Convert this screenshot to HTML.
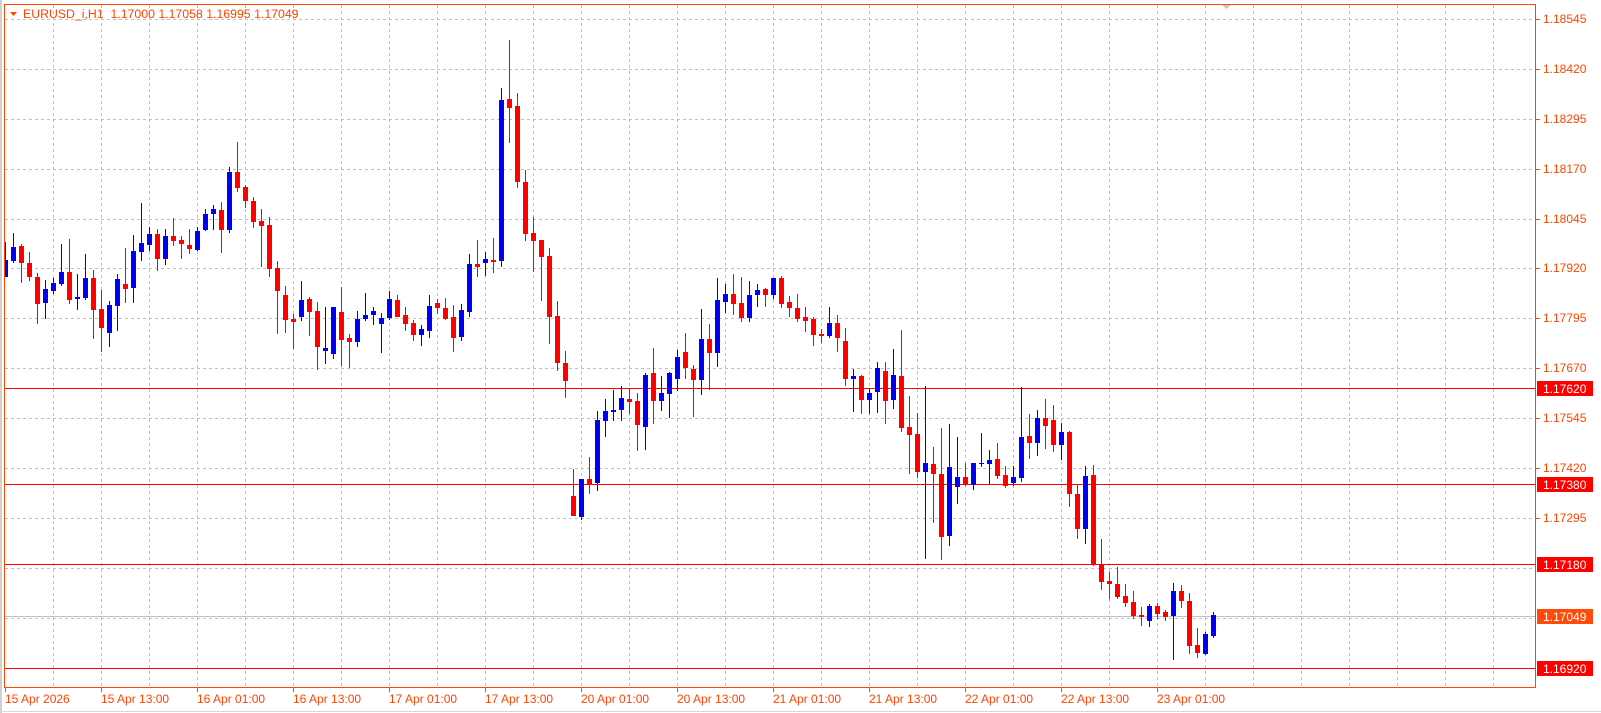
<!DOCTYPE html>
<html><head><meta charset="utf-8">
<style>
html,body{margin:0;padding:0;background:#fff;width:1601px;height:713px;overflow:hidden}
svg{display:block}
text{font-family:"Liberation Sans",sans-serif;font-size:12px}
</style></head><body>
<svg width="1601" height="713" viewBox="0 0 1601 713" xmlns="http://www.w3.org/2000/svg">
<rect x="0" y="0" width="1601" height="713" fill="#fff"/>
<line x1="1" y1="0" x2="1" y2="713" stroke="#a0a0a0"/>
<line x1="0" y1="711.5" x2="1601" y2="711.5" stroke="#d8d8d8"/>
<g stroke="#c0c0c0" stroke-width="1" stroke-dasharray="3,3" fill="none">
<path d="M53.5 5V686M101.5 5V686M149.5 5V686M197.5 5V686M245.5 5V686M293.5 5V686M341.5 5V686M389.5 5V686M437.5 5V686M485.5 5V686M533.5 5V686M581.5 5V686M629.5 5V686M677.5 5V686M725.5 5V686M773.5 5V686M821.5 5V686M869.5 5V686M917.5 5V686M965.5 5V686M1013.5 5V686M1061.5 5V686M1109.5 5V686M1157.5 5V686M1205.5 5V686M1253.5 5V686M1301.5 5V686M1349.5 5V686M1397.5 5V686M1445.5 5V686M1493.5 5V686"/>
<path d="M5 19.5H1534M5 69.5H1534M5 119.5H1534M5 169.5H1534M5 219.5H1534M5 268.5H1534M5 318.5H1534M5 368.5H1534M5 418.5H1534M5 468.5H1534M5 518.5H1534M5 568.5H1534M5 618.5H1534M5 668.5H1534"/>
</g>
<line x1="5" y1="616.5" x2="1535" y2="616.5" stroke="#c0c0c0"/>
<g stroke="#ff0000" stroke-width="1">
<line x1="5" y1="388.5" x2="1535" y2="388.5"/>
<line x1="5" y1="484.5" x2="1535" y2="484.5"/>
<line x1="5" y1="564.5" x2="1535" y2="564.5"/>
<line x1="5" y1="668.5" x2="1535" y2="668.5"/>
</g>
<path stroke="#0000f0" stroke-width="1" fill="none" d="M5.5 242V277M13.5 233V263M45.5 280V319M53.5 278V294M61.5 244V286M77.5 274V310M85.5 254V300M109.5 301V347M117.5 274V331M133.5 235V303M141.5 203V261M149.5 227V251M165.5 229V265M197.5 227V251M205.5 209V231M213.5 205V230M229.5 167V233M301.5 281V321M325.5 307V364M333.5 307V359M357.5 311V347M365.5 293V321M373.5 307V325M381.5 313V353M389.5 291V320M421.5 325V346M429.5 295V338M461.5 304V341M469.5 254V317M485.5 252V276M501.5 88V267M581.5 479V520M597.5 411V491M605.5 399V437M613.5 390V421M621.5 386V421M645.5 373V450M661.5 376V411M669.5 372V418M677.5 350V391M701.5 309V395M717.5 278V367M725.5 284V313M749.5 281V322M757.5 284V307M773.5 278V299M829.5 307V338M853.5 369V412M869.5 389V414M877.5 362V413M893.5 349V409M925.5 386V559M949.5 424V546M957.5 437V504M973.5 463V490M981.5 433V467M989.5 450V484M1013.5 466V486M1021.5 387V482M1037.5 410V456M1061.5 423V460M1085.5 466V544M1149.5 604V627M1173.5 583V660M1205.5 632V655M1213.5 612V638"/>
<path fill="#0000f0" d="M4 260h4v17h-4zM11 247h5v14h-5zM43 289h5v14h-5zM51 283h5v8h-5zM59 272h5v12h-5zM75 297h5v2h-5zM83 278h5v20h-5zM107 305h5v28h-5zM115 279h5v27h-5zM131 251h5v37h-5zM139 243h5v9h-5zM147 234h5v11h-5zM163 236h5v23h-5zM195 231h5v19h-5zM203 214h5v16h-5zM211 209h5v5h-5zM227 172h5v58h-5zM299 300h5v17h-5zM323 348h5v3h-5zM331 307h5v47h-5zM355 319h5v23h-5zM363 315h5v4h-5zM371 311h5v4h-5zM379 318h5v6h-5zM387 299h5v19h-5zM419 329h5v6h-5zM427 306h5v25h-5zM459 310h5v27h-5zM467 264h5v48h-5zM483 259h5v4h-5zM499 100h5v161h-5zM579 479h5v38h-5zM595 420h5v63h-5zM603 411h5v10h-5zM611 410h5v2h-5zM619 398h5v12h-5zM643 375h5v52h-5zM659 393h5v8h-5zM667 373h5v21h-5zM675 357h5v22h-5zM699 339h5v41h-5zM715 300h5v53h-5zM723 294h5v8h-5zM747 295h5v23h-5zM755 290h5v5h-5zM771 278h5v17h-5zM827 323h5v13h-5zM851 376h5v3h-5zM867 393h5v7h-5zM875 368h5v24h-5zM891 375h5v25h-5zM923 463h5v9h-5zM947 467h5v69h-5zM955 477h5v10h-5zM971 463h5v22h-5zM979 463h5v1h-5zM987 460h5v4h-5zM1011 477h5v6h-5zM1019 437h5v41h-5zM1035 418h5v25h-5zM1059 432h5v13h-5zM1083 476h5v53h-5zM1147 606h5v15h-5zM1171 591h5v25h-5zM1203 634h5v20h-5zM1211 615h5v21h-5z"/>
<path stroke="#ff0000" stroke-width="1" fill="none" d="M21.5 244V283M29.5 252V281M37.5 273V324M69.5 239V304M93.5 270V339M101.5 290V352M125.5 248V303M157.5 229V271M173.5 218V246M181.5 236V259M189.5 229V254M221.5 202V253M237.5 142V192M245.5 185V208M253.5 197V228M261.5 209V267M269.5 217V277M277.5 261V334M285.5 286V333M293.5 314V349M309.5 297V336M317.5 302V370M341.5 287V366M349.5 334V368M397.5 295V317M405.5 307V331M413.5 320V341M437.5 299V314M445.5 298V320M453.5 305V352M477.5 240V277M493.5 238V273M509.5 40V143M517.5 93V188M525.5 170V241M533.5 217V272M541.5 240V301M549.5 248V344M557.5 301V371M565.5 351V398M573.5 469V516M589.5 457V494M629.5 389V414M637.5 393V451M653.5 348V424M685.5 333V379M693.5 365V417M709.5 324V390M733.5 274V315M741.5 277V322M765.5 288V307M781.5 276V308M789.5 296V317M797.5 294V322M805.5 307V332M813.5 317V346M821.5 329V343M837.5 315V352M845.5 328V386M861.5 375V414M885.5 362V424M901.5 330V432M909.5 396V474M917.5 413V478M933.5 447V523M941.5 428V560M965.5 463V486M997.5 443V479M1005.5 466V488M1029.5 414V459M1045.5 399V449M1053.5 405V452M1069.5 431V507M1077.5 484V539M1093.5 465V566M1101.5 539V590M1109.5 572V599M1117.5 567V599M1125.5 584V607M1133.5 591V619M1141.5 607V626M1157.5 603V619M1165.5 610V621M1181.5 585V608M1189.5 593V654M1197.5 628V658"/>
<path fill="#ff0000" d="M19 246h5v17h-5zM27 263h5v14h-5zM35 277h5v27h-5zM67 272h5v28h-5zM91 278h5v32h-5zM99 309h5v19h-5zM123 284h5v5h-5zM155 234h5v25h-5zM171 236h5v5h-5zM179 240h5v4h-5zM187 245h5v4h-5zM219 210h5v20h-5zM235 172h5v16h-5zM243 187h5v14h-5zM251 201h5v21h-5zM259 221h5v5h-5zM267 225h5v44h-5zM275 268h5v23h-5zM283 295h5v25h-5zM291 319h5v3h-5zM307 299h5v13h-5zM315 311h5v36h-5zM339 312h5v28h-5zM347 338h5v4h-5zM395 300h5v17h-5zM403 315h5v9h-5zM411 323h5v12h-5zM435 303h5v5h-5zM443 308h5v11h-5zM451 317h5v21h-5zM475 264h5v3h-5zM491 260h5v2h-5zM507 99h5v9h-5zM515 106h5v76h-5zM523 182h5v52h-5zM531 233h5v8h-5zM539 240h5v17h-5zM547 256h5v61h-5zM555 316h5v47h-5zM563 363h5v18h-5zM571 496h5v20h-5zM587 479h5v6h-5zM627 399h5v3h-5zM635 401h5v24h-5zM651 373h5v28h-5zM683 352h5v16h-5zM691 369h5v11h-5zM707 339h5v14h-5zM731 294h5v10h-5zM739 303h5v15h-5zM763 289h5v6h-5zM779 278h5v26h-5zM787 302h5v6h-5zM795 308h5v11h-5zM803 317h5v4h-5zM811 319h5v16h-5zM819 334h5v2h-5zM835 323h5v15h-5zM843 341h5v38h-5zM859 376h5v24h-5zM883 371h5v30h-5zM899 376h5v52h-5zM907 427h5v8h-5zM915 434h5v38h-5zM931 464h5v10h-5zM939 474h5v63h-5zM963 477h5v8h-5zM995 459h5v17h-5zM1003 475h5v11h-5zM1027 436h5v7h-5zM1043 418h5v8h-5zM1051 420h5v25h-5zM1067 432h5v62h-5zM1075 494h5v35h-5zM1091 475h5v90h-5zM1099 565h5v17h-5zM1107 581h5v3h-5zM1115 584h5v13h-5zM1123 596h5v7h-5zM1131 602h5v14h-5zM1139 615h5v2h-5zM1155 606h5v8h-5zM1163 612h5v5h-5zM1179 591h5v10h-5zM1187 601h5v45h-5zM1195 645h5v8h-5z"/>
<rect x="4.5" y="4.5" width="1531" height="683" fill="none" stroke="#ff4500" stroke-width="1"/>
<path d="M1222 5h9l-4.5 4z" fill="#c8c8c8"/>
<path d="M10 12h7l-3.5 4z" fill="#ff4500"/>
<text x="23" y="18" fill="#ff4500" style="font-size:12.3px;white-space:pre" xml:space="preserve">EURUSD_i,H1  1.17000 1.17058 1.16995 1.17049</text>
<g stroke="#ff4500"><path d="M1536 19.5h4M1536 69.5h4M1536 119.5h4M1536 169.5h4M1536 219.5h4M1536 268.5h4M1536 318.5h4M1536 368.5h4M1536 418.5h4M1536 468.5h4M1536 518.5h4"/></g>
<g fill="#ff4500">
<text x="1543" y="23">1.18545</text>
<text x="1543" y="73">1.18420</text>
<text x="1543" y="123">1.18295</text>
<text x="1543" y="173">1.18170</text>
<text x="1543" y="223">1.18045</text>
<text x="1543" y="272">1.17920</text>
<text x="1543" y="322">1.17795</text>
<text x="1543" y="372">1.17670</text>
<text x="1543" y="422">1.17545</text>
<text x="1543" y="472">1.17420</text>
<text x="1543" y="522">1.17295</text>
</g>
<rect x="1537" y="381" width="56" height="15" fill="#ff0000"/>
<rect x="1537" y="477" width="56" height="15" fill="#ff0000"/>
<rect x="1537" y="557" width="56" height="15" fill="#ff0000"/>
<rect x="1537" y="609" width="56" height="15" fill="#ff4a0a"/>
<rect x="1537" y="661" width="56" height="15" fill="#ff0000"/>
<g fill="#fff">
<text x="1543" y="393">1.17620</text>
<text x="1543" y="489">1.17380</text>
<text x="1543" y="569">1.17180</text>
<text x="1543" y="621">1.17049</text>
<text x="1543" y="673">1.16920</text>
</g>
<g stroke="#ff4500"><path d="M5.5 688v4M101.5 688v4M197.5 688v4M293.5 688v4M389.5 688v4M485.5 688v4M581.5 688v4M677.5 688v4M773.5 688v4M869.5 688v4M965.5 688v4M1061.5 688v4M1157.5 688v4"/></g>
<g fill="#ff4500" style="font-size:12.7px">
<text x="5" y="703">15 Apr 2026</text>
<text x="101" y="703">15 Apr 13:00</text>
<text x="197" y="703">16 Apr 01:00</text>
<text x="293" y="703">16 Apr 13:00</text>
<text x="389" y="703">17 Apr 01:00</text>
<text x="485" y="703">17 Apr 13:00</text>
<text x="581" y="703">20 Apr 01:00</text>
<text x="677" y="703">20 Apr 13:00</text>
<text x="773" y="703">21 Apr 01:00</text>
<text x="869" y="703">21 Apr 13:00</text>
<text x="965" y="703">22 Apr 01:00</text>
<text x="1061" y="703">22 Apr 13:00</text>
<text x="1157" y="703">23 Apr 01:00</text>
</g>
</svg>
</body></html>
